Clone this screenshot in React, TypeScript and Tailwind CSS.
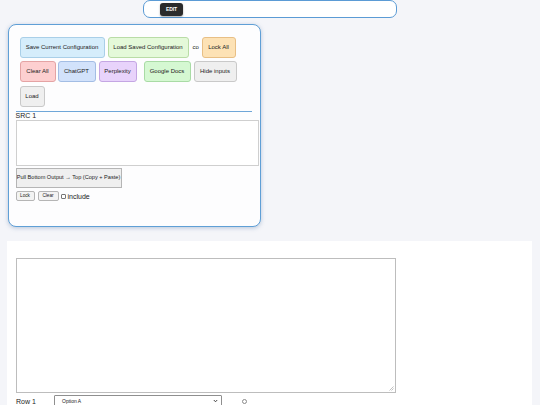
import React from "react";

const Btn = ({
  label,
  cls,
}: {
  label: string;
  cls: string;
}) => (
  <div
    className={`h-[21px] flex items-center justify-center rounded-[3px] border text-[6px] leading-none text-[#222] ${cls}`}
  >
    {label}
  </div>
);

export default function App() {
  return (
    <div className="min-h-[405px] h-[405px] overflow-hidden bg-[#f4f5f9] font-['Liberation_Sans',Arial,sans-serif]">
      {/* top edit bar */}
      <div className="ml-[143px] w-[254px] h-[18px] rounded-[7px] border border-[#5b9bd5] bg-white flex items-start">
        <div className="ml-[16px] mt-[2px] w-[23px] h-[13px] rounded-[3px] bg-[#2b2b2b] shadow-[0_1px_2px_rgba(0,0,0,0.35)] flex items-center justify-center text-white text-[5px] font-bold leading-none tracking-tight">
          EDIT
        </div>
      </div>

      {/* main panel */}
      <div className="ml-[8px] mt-[6px] w-[253px] h-[203px] rounded-[8px] border-[1.5px] border-[#5f9fd6] bg-[#fdfdfe] shadow-[0_1px_4px_rgba(70,110,160,0.35)] pt-[11.5px] pl-[6.5px]">
        <div className="pl-[4px]">
          <div className="flex items-center">
            <Btn label="Save Current Configuration" cls="w-[85px] bg-[#d5edfb] border-[#a9cfe8]" />
            <Btn label="Load Saved Configuration" cls="ml-[3px] w-[81px] bg-[#e4f9d9] border-[#b9dca6]" />
            <span className="ml-[4px] w-[9px] text-[6px] text-[#222]">co</span>
            <Btn label="Lock All" cls="w-[34px] bg-[#fde2b5] border-[#e8bf85]" />
          </div>
          <div className="flex items-center mt-[3px]">
            <Btn label="Clear All" cls="w-[36px] bg-[#fdcfd0] border-[#e4a3a4]" />
            <Btn label="ChatGPT" cls="ml-[2px] w-[38px] bg-[#d2e2fb] border-[#a3bde4]" />
            <Btn label="Perplexity" cls="ml-[3px] w-[38px] bg-[#e8d3fb] border-[#c4a6e3]" />
            <Btn label="Google Docs" cls="ml-[7px] w-[47px] bg-[#d5f8d2] border-[#a9dba5]" />
            <Btn label="Hide inputs" cls="ml-[3px] w-[43px] bg-[#efefef] border-[#c9c9c9]" />
          </div>
          <div className="flex items-center mt-[4px]">
            <Btn label="Load" cls="w-[25px] bg-[#efefef] border-[#c9c9c9]" />
          </div>
        </div>
        <div className="mt-[4px] w-[236px] h-[1.5px] bg-[#6fa6d8]" />
        <div className="text-[7px] leading-[8px] text-[#222] h-[8px]">SRC 1</div>
        <div className="w-[243px] h-[46px] border border-[#cfcfcf] bg-white" />
        <div className="mt-[2px] w-[106px] h-[20px] border border-[#b5b5b5] bg-[#efefef] flex items-center justify-center text-[5.6px] leading-none text-[#222] whitespace-nowrap">
          Pull Bottom Output → Top (Copy + Paste)
        </div>
        <div className="mt-[3px] flex items-center h-[10px]">
          <div className="w-[19px] h-[10px] border border-[#b5b5b5] rounded-[2px] bg-[#f3f3f3] flex items-center justify-center text-[4.7px] leading-none text-[#222]">
            Lock
          </div>
          <div className="ml-[3px] w-[21px] h-[10px] border border-[#b5b5b5] rounded-[2px] bg-[#f3f3f3] flex items-center justify-center text-[4.7px] leading-none text-[#222]">
            Clear
          </div>
          <div className="ml-[2px] w-[5px] h-[5px] border border-[#767676] rounded-[1px] bg-white" />
          <span className="ml-[2px] text-[7px] leading-none text-[#222]">include</span>
        </div>
      </div>

      {/* bottom panel */}
      <div className="ml-[7px] mt-[14px] w-[525px] h-[200px] bg-white pt-[17px] pl-[9px]">
        <div className="relative w-[380px] h-[135px] border border-[#bdbdbd] bg-white">
          <svg className="absolute right-[1px] bottom-[1px]" width="5" height="5" viewBox="0 0 5 5">
            <path d="M4.5 0.5 L0.5 4.5 M4.5 2.5 L2.5 4.5" stroke="#999" strokeWidth="0.6" />
          </svg>
        </div>
        <div className="mt-[2px] flex items-center h-[12px]">
          <span className="w-[38px] text-[7px] leading-none text-[#222]">Row 1</span>
          <div className="w-[168px] h-[12px] border border-[#8f8f8f] rounded-[1px] bg-white flex items-center pl-[7px] pr-[3px] text-[5px] leading-none text-[#222]">
            <span className="flex-1">Option A</span>
            <svg width="5" height="4" viewBox="0 0 5 4">
              <path d="M0.8 1 L2.5 2.8 L4.2 1" stroke="#333" strokeWidth="0.9" fill="none" />
            </svg>
          </div>
          <div className="ml-[20px] w-[5px] h-[5px] rounded-full border border-[#8a8a8a] bg-white" />
        </div>
      </div>
    </div>
  );
}
